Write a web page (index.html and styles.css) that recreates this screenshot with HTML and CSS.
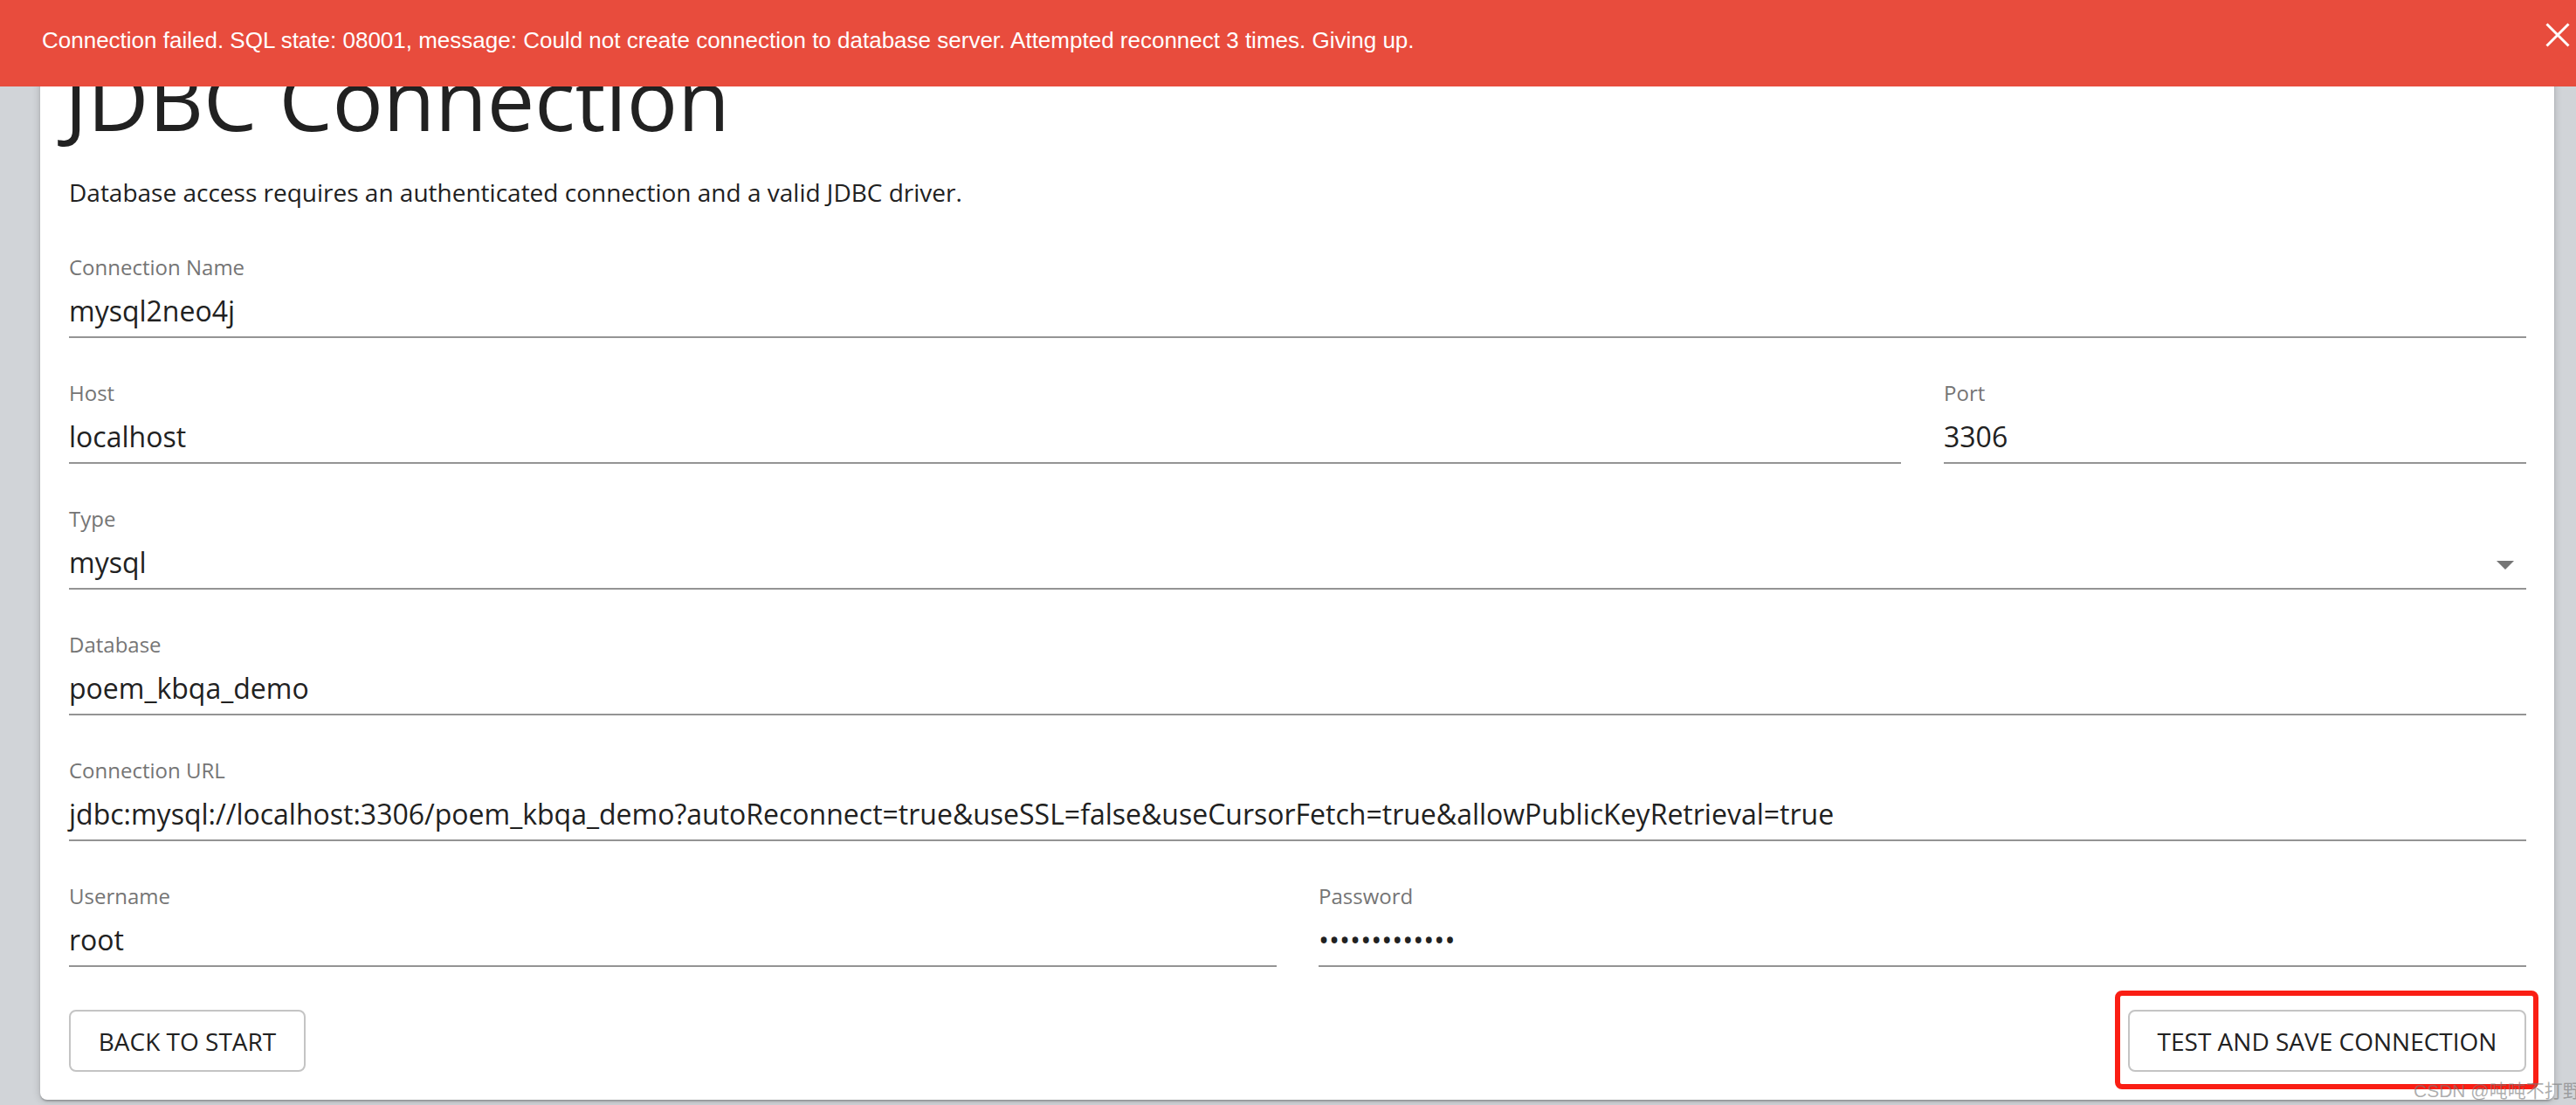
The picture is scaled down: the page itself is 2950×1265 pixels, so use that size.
FILE: index.html
```html
<!DOCTYPE html>
<html lang="en">
<head>
<meta charset="utf-8">
<title>JDBC Connection</title>
<link rel="stylesheet" href="styles.css">
</head>
<body>
  <main class="card">
    <h1 class="title">JDBC Connection</h1>
    <p class="desc">Database access requires an authenticated connection and a valid JDBC driver.</p>
    <div class="form">
      <div class="row">
        <div class="field">
          <div class="label">Connection Name</div>
          <div class="value">mysql2neo4j</div>
        </div>
      </div>
      <div class="row row-host">
        <div class="field">
          <div class="label">Host</div>
          <div class="value">localhost</div>
        </div>
        <div class="field">
          <div class="label">Port</div>
          <div class="value">3306</div>
        </div>
      </div>
      <div class="row">
        <div class="field">
          <div class="label">Type</div>
          <div class="value value-select"><span class="select-text">mysql</span><span class="select-arrow"></span></div>
        </div>
      </div>
      <div class="row">
        <div class="field">
          <div class="label">Database</div>
          <div class="value">poem_kbqa_demo</div>
        </div>
      </div>
      <div class="row">
        <div class="field">
          <div class="label">Connection URL</div>
          <div class="value">jdbc:mysql://localhost:3306/poem_kbqa_demo?autoReconnect=true&amp;useSSL=false&amp;useCursorFetch=true&amp;allowPublicKeyRetrieval=true</div>
        </div>
      </div>
      <div class="row row-half">
        <div class="field">
          <div class="label">Username</div>
          <div class="value">root</div>
        </div>
        <div class="field">
          <div class="label">Password</div>
          <div class="value value-pass">•••••••••••••</div>
        </div>
      </div>
    </div>
    <div class="actions">
      <button class="btn btn-back">BACK TO START</button>
      <button class="btn btn-save">TEST AND SAVE CONNECTION</button>
    </div>
  </main>

  <div class="alert">
    <span class="alert-msg">Connection failed. SQL state: 08001, message: Could not create connection to database server. Attempted reconnect 3 times. Giving up.</span>
    <span class="alert-close">
      <svg width="28" height="28" viewBox="0 0 28 28"><path d="M1.5 1.5 L26.5 26.5 M26.5 1.5 L1.5 26.5" stroke="#ffffff" stroke-width="3" fill="none"/></svg>
    </span>
  </div>

  <div class="annot"></div>
  <div class="watermark">CSDN @吨吨不打野</div>
</body>
</html>
```

FILE: styles.css
```css
html, body {
  margin: 0;
  padding: 0;
}
body {
  position: relative;
  width: 2950px;
  height: 1265px;
  overflow: hidden;
  background: #d1d4d8;
  box-sizing: border-box;
  padding: 0 25px 0 46px;
  font-family: "Open Sans", "Noto Sans", sans-serif;
  color: #212121;
}

.alert {
  position: absolute;
  left: 0;
  top: 0;
  width: 2950px;
  height: 99px;
  background: #e84c3d;
  box-sizing: border-box;
  padding: 31px 0 0 48px;
  display: flex;
  align-items: flex-start;
}
.alert-msg {
  font-family: "Liberation Sans", Arial, sans-serif;
  font-size: 26px;
  line-height: 30px;
  color: #ffffff;
  flex: 1;
  white-space: nowrap;
}
.alert-close {
  position: absolute;
  right: 7px;
  top: 26px;
  width: 28px;
  height: 28px;
}
.alert-close svg {
  display: block;
}

.card {
  background: #ffffff;
  border-radius: 8px;
  box-shadow: 0 2px 2px rgba(0,0,0,0.14), 0 3px 2px -2px rgba(0,0,0,0.12), 0 1px 10px rgba(0,0,0,0.2);
  padding: 54px 32px 32px 33px;
  height: 1259px;
  box-sizing: border-box;
}

.title {
  margin: 0;
  font-size: 97px;
  line-height: 116px;
  font-weight: 400;
  color: #212121;
  margin-left: -5px;
  white-space: nowrap;
}
.desc {
  margin: 32px 0 0;
  font-size: 28px;
  line-height: 36px;
  color: #212121;
  white-space: nowrap;
}

.form {
  margin-top: 56px;
  display: flex;
  flex-direction: column;
  gap: 51px;
}
.row {
  display: grid;
  grid-template-columns: 1fr;
}
.row-host {
  grid-template-columns: 2098px 1fr;
  column-gap: 49px;
}
.row-half {
  grid-template-columns: 1383px 1fr;
  column-gap: 48px;
}
.field {
  min-width: 0;
}
.label {
  font-size: 24px;
  line-height: 24px;
  color: #757575;
  margin-bottom: 16px;
  white-space: nowrap;
}
.value {
  font-size: 32px;
  line-height: 44px;
  height: 44px;
  padding-bottom: 7px;
  border-bottom: 2px solid #949494;
  color: #212121;
  white-space: nowrap;
}
.value-select {
  display: flex;
  align-items: center;
}
.select-text {
  flex: 1;
}
.select-arrow {
  width: 0;
  height: 0;
  border-left: 10px solid transparent;
  border-right: 10px solid transparent;
  border-top: 10px solid #757575;
  margin-right: 14px;
  margin-top: 6px;
}

.actions {
  margin-top: 49px;
  display: flex;
  justify-content: space-between;
}
.btn {
  height: 71px;
  box-sizing: border-box;
  border: 2px solid #c4c4c4;
  border-radius: 8px;
  background: #ffffff;
  font-family: "Open Sans", "Noto Sans", sans-serif;
  font-size: 28px;
  line-height: 36px;
  color: #212121;
  padding: 0;
  margin: 0;
  white-space: nowrap;
  text-align: center;
}
.btn-back {
  width: 271px;
}
.btn-save {
  width: 456px;
}

.annot {
  position: absolute;
  left: 2422px;
  top: 1134px;
  width: 485px;
  height: 113px;
  box-sizing: border-box;
  border: 6px solid #fa1e14;
  border-radius: 8px;
}
.watermark {
  position: absolute;
  left: 2764px;
  top: 1235px;
  font-family: "Liberation Sans", "Noto Sans CJK SC", sans-serif;
  font-size: 21px;
  line-height: 28px;
  color: rgba(120,120,120,0.6);
  white-space: nowrap;
}
```
